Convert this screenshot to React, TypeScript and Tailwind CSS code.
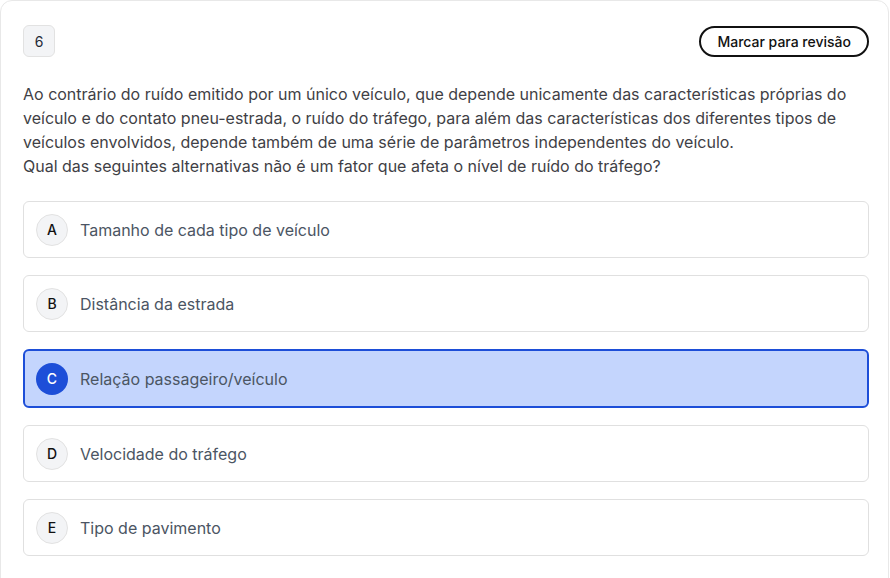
import React from "react";

const options = [
  { l: "A", t: "Tamanho de cada tipo de veículo" },
  { l: "B", t: "Distância da estrada" },
  { l: "C", t: "Relação passageiro/veículo", sel: true },
  { l: "D", t: "Velocidade do tráfego" },
  { l: "E", t: "Tipo de pavimento" },
];

export default function App() {
  return (
    <div className="w-[890px] h-[578px] overflow-hidden bg-white" style={{ fontFamily: "Inter, 'Noto Sans', sans-serif" }}>
      <div className="w-[889px] h-[620px] border border-[#e8e8e8] rounded-xl px-[22px] pt-[24px]">
        <div className="flex items-center justify-between">
          <div className="w-[32px] h-[32px] rounded-md bg-[#f3f4f6] border border-[#e2e2e2] flex items-center justify-center text-[14px] text-[#1f2937]">6</div>
          <button className="h-[31px] px-[16px] rounded-full border-2 border-[#111] text-[14px] font-medium text-[#111] mr-[-3px]">Marcar para revisão</button>
        </div>
        <p className="mt-[25px] text-[16px] leading-[24px] text-[#3f3f46]">
          Ao contrário do ruído emitido por um único veículo, que depende unicamente das características próprias do veículo e do contato pneu-estrada, o ruído do tráfego, para além das características dos diferentes tipos de veículos envolvidos, depende também de uma série de parâmetros independentes do veículo.
          <br />
          Qual das seguintes alternativas não é um fator que afeta o nível de ruído do tráfego?
        </p>
        <div className="mt-[23px] flex flex-col gap-[17px] w-[846px]">
          {options.map((o) =>
            o.sel ? (
              <div key={o.l} className="h-[59px] rounded-md border-2 border-[#1d4ed8] bg-[#c4d5fd] flex items-center px-[11px] gap-[12px]">
                <div className="w-[32px] h-[32px] rounded-full bg-[#1d4ed8] text-white flex items-center justify-center text-[14px] font-medium">{o.l}</div>
                <span className="text-[16px] text-[#4b5563]">{o.t}</span>
              </div>
            ) : (
              <div key={o.l} className="h-[57px] rounded-md border border-[#e0e0e0] bg-white flex items-center px-[12px] gap-[12px]">
                <div className="w-[32px] h-[32px] rounded-full bg-[#f3f4f6] border border-[#e2e2e2] text-[#111] flex items-center justify-center text-[14px] font-medium">{o.l}</div>
                <span className="text-[16px] text-[#4b5563]">{o.t}</span>
              </div>
            )
          )}
        </div>
      </div>
    </div>
  );
}
